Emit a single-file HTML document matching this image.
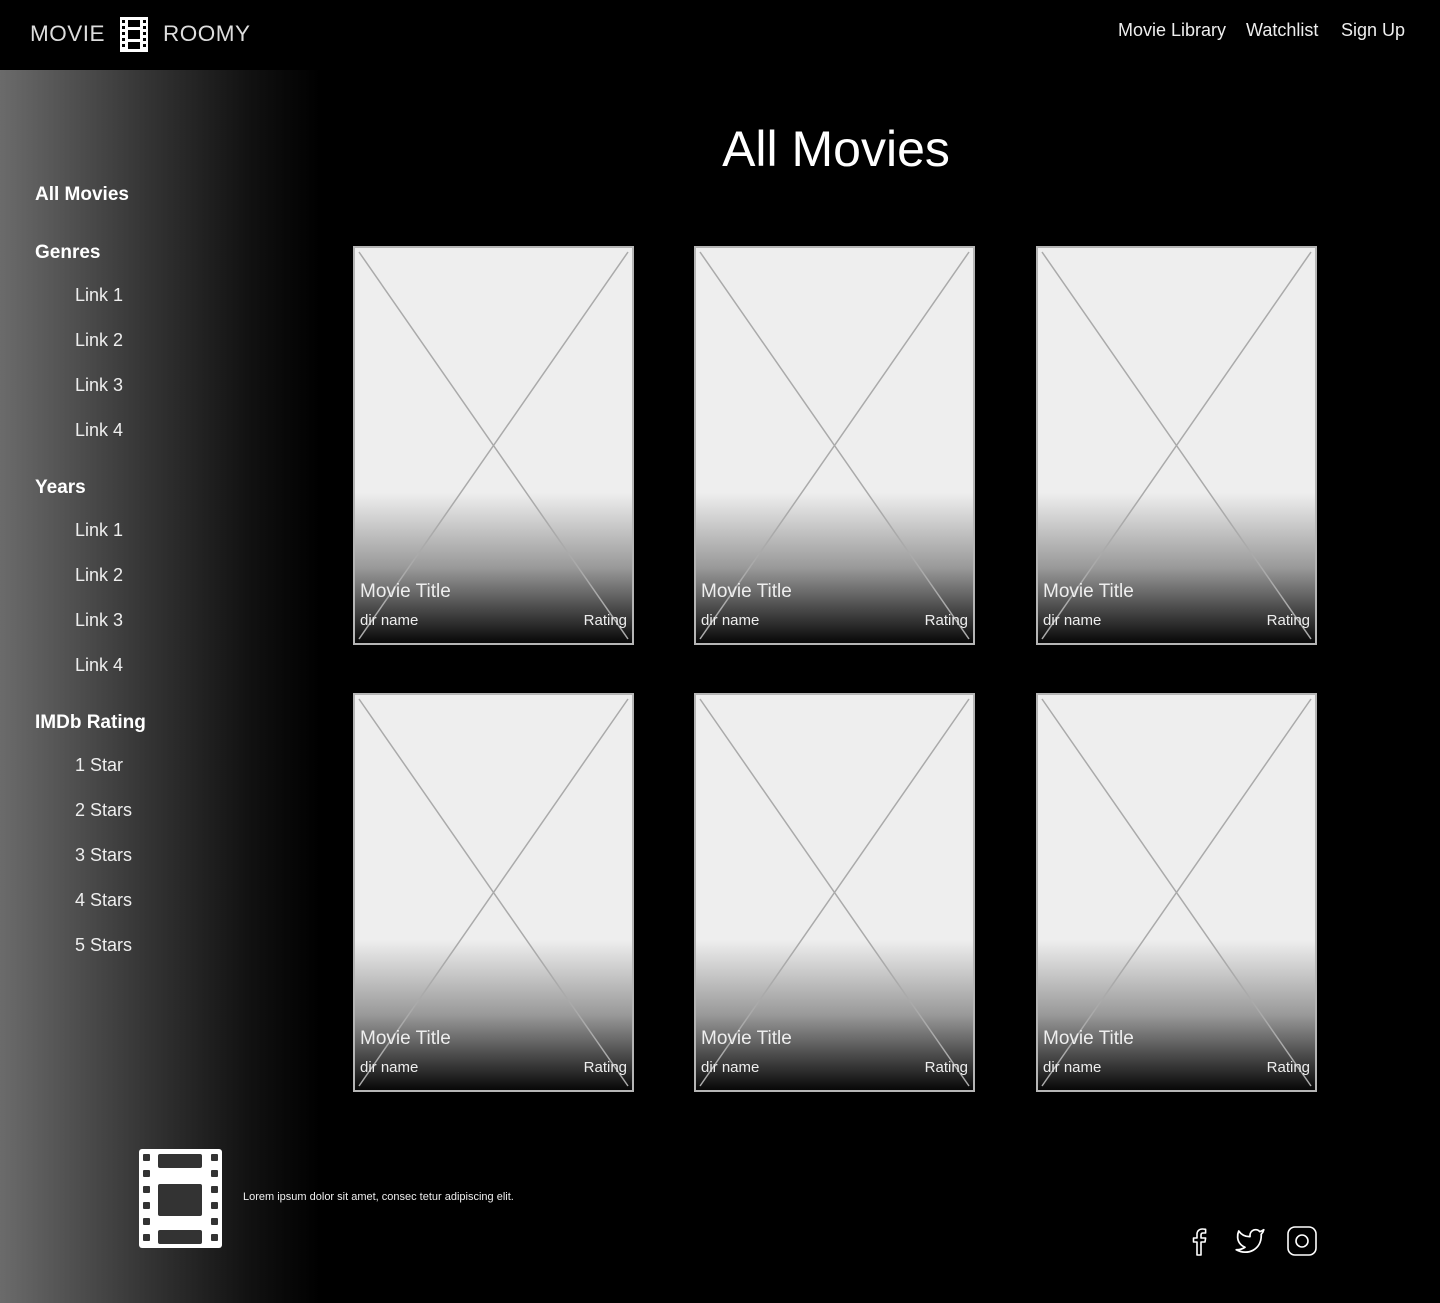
<!DOCTYPE html>
<html><head><meta charset="utf-8">
<style>
*{margin:0;padding:0;box-sizing:border-box}
body{width:1440px;height:1303px;background:#000;position:relative;overflow:hidden;font-family:"Liberation Sans",sans-serif;color:#fff}
.side{position:absolute;left:0;top:70px;width:330px;height:1233px;background:linear-gradient(to right,#6b6b6b 0px,#333 150px,#111 250px,#000 320px)}
.hdr{position:absolute;left:0;top:0;width:1440px;height:70px;background:#000}
.logo{position:absolute;top:21px;font-size:22.5px;letter-spacing:0.5px;color:#ddd}
.nav{position:absolute;top:20px;font-size:18px;color:#eee}
.s{position:absolute;font-size:19px;font-weight:bold;left:35px}
.l{position:absolute;font-size:18px;left:75px;color:#eee}
h1{position:absolute;left:0;width:1672px;text-align:center;top:120px;font-size:50px;font-weight:normal}
.card{position:absolute;width:281px;height:399px;border:2px solid #b5b5b5;background:linear-gradient(to bottom,#eee 0px,#eee 245px,#999 320px,#000 399px);overflow:hidden}
.card svg{position:absolute;left:0;top:0}
.t{position:absolute;left:5px;top:333px;font-size:19px;color:#eee}
.d{position:absolute;left:5px;top:364px;font-size:15px;color:#eee}
.r{position:absolute;right:5px;top:364px;font-size:15px;color:#eee}
</style></head><body>
<div class="side"></div>
<div class="hdr"></div>
<div class="logo" style="left:30px">MOVIE</div>
<svg style="position:absolute;left:120px;top:17px" width="28" height="35" viewBox="0 0 28 35"><rect width="28" height="35" fill="#fff"/><g fill="#000"><rect x="8" y="3" width="12" height="7"/><rect x="8" y="13" width="12" height="9"/><rect x="8" y="25" width="12" height="7"/><rect x="2" y="3" width="3" height="3"/><rect x="2" y="9" width="3" height="3"/><rect x="2" y="15" width="3" height="3"/><rect x="2" y="21" width="3" height="3"/><rect x="2" y="27" width="3" height="3"/><rect x="23" y="3" width="3" height="3"/><rect x="23" y="9" width="3" height="3"/><rect x="23" y="15" width="3" height="3"/><rect x="23" y="21" width="3" height="3"/><rect x="23" y="27" width="3" height="3"/></g></svg>
<div class="logo" style="left:163px">ROOMY</div>
<div class="nav" style="left:1118px">Movie Library</div>
<div class="nav" style="left:1246px">Watchlist</div>
<div class="nav" style="left:1341px">Sign Up</div>

<div class="s" style="top:184px">All Movies</div>
<div class="s" style="top:242px">Genres</div>
<div class="l" style="top:285px">Link 1</div>
<div class="l" style="top:330px">Link 2</div>
<div class="l" style="top:375px">Link 3</div>
<div class="l" style="top:420px">Link 4</div>
<div class="s" style="top:477px">Years</div>
<div class="l" style="top:520px">Link 1</div>
<div class="l" style="top:565px">Link 2</div>
<div class="l" style="top:610px">Link 3</div>
<div class="l" style="top:655px">Link 4</div>
<div class="s" style="top:712px">IMDb Rating</div>
<div class="l" style="top:755px">1 Star</div>
<div class="l" style="top:800px">2 Stars</div>
<div class="l" style="top:845px">3 Stars</div>
<div class="l" style="top:890px">4 Stars</div>
<div class="l" style="top:935px">5 Stars</div>

<h1>All Movies</h1>

<div class="card" style="left:353px;top:246px"><svg width="277" height="395"><path d="M4 4L273 391M273 4L4 391" stroke="#aaa" stroke-width="1.5"/></svg><div class="t">Movie Title</div><div class="d">dir name</div><div class="r">Rating</div></div>
<div class="card" style="left:694px;top:246px"><svg width="277" height="395"><path d="M4 4L273 391M273 4L4 391" stroke="#aaa" stroke-width="1.5"/></svg><div class="t">Movie Title</div><div class="d">dir name</div><div class="r">Rating</div></div>
<div class="card" style="left:1036px;top:246px"><svg width="277" height="395"><path d="M4 4L273 391M273 4L4 391" stroke="#aaa" stroke-width="1.5"/></svg><div class="t">Movie Title</div><div class="d">dir name</div><div class="r">Rating</div></div>
<div class="card" style="left:353px;top:693px"><svg width="277" height="395"><path d="M4 4L273 391M273 4L4 391" stroke="#aaa" stroke-width="1.5"/></svg><div class="t">Movie Title</div><div class="d">dir name</div><div class="r">Rating</div></div>
<div class="card" style="left:694px;top:693px"><svg width="277" height="395"><path d="M4 4L273 391M273 4L4 391" stroke="#aaa" stroke-width="1.5"/></svg><div class="t">Movie Title</div><div class="d">dir name</div><div class="r">Rating</div></div>
<div class="card" style="left:1036px;top:693px"><svg width="277" height="395"><path d="M4 4L273 391M273 4L4 391" stroke="#aaa" stroke-width="1.5"/></svg><div class="t">Movie Title</div><div class="d">dir name</div><div class="r">Rating</div></div>

<svg style="position:absolute;left:139px;top:1149px" width="83" height="99" viewBox="0 0 83 99"><rect width="83" height="99" rx="3" fill="#fff"/><g fill="#333"><rect x="19" y="5" width="44" height="14" rx="2"/><rect x="19" y="35" width="44" height="32" rx="2"/><rect x="19" y="81" width="44" height="14" rx="2"/><g id="h"><rect x="4" y="5" width="7" height="7" rx="1"/><rect x="4" y="21" width="7" height="7" rx="1"/><rect x="4" y="37" width="7" height="7" rx="1"/><rect x="4" y="53" width="7" height="7" rx="1"/><rect x="4" y="69" width="7" height="7" rx="1"/><rect x="4" y="85" width="7" height="7" rx="1"/></g><use href="#h" x="68"/></g></svg>
<div style="position:absolute;left:243px;top:1191px;font-size:11px;color:#eee">Lorem ipsum dolor sit amet, consec tetur adipiscing elit.</div>

<svg style="position:absolute;left:1185px;top:1225px" width="135" height="32" fill="none" stroke="#fff" stroke-width="1.6" stroke-linejoin="round">
<path d="M16 30V17h4l.6-4H16v-3c0-1.2.5-2 2-2h2.6V4.3C20 4.2 18.7 4 17.4 4 14.5 4 12 5.8 12 9.3V13H8.5v4H12v13z"/>
<g transform="translate(50,1) scale(1.25)"><path d="M23 3a10.9 10.9 0 0 1-3.14 1.53 4.48 4.48 0 0 0-7.86 3v1A10.66 10.66 0 0 1 3 4s-4 9 5 13a11.64 11.64 0 0 1-7 2c9 5 20 0 20-11.5a4.5 4.5 0 0 0-.08-.83A7.72 7.72 0 0 0 23 3z" stroke-width="1.4"/></g>
<rect x="103" y="2" width="28" height="28" rx="7"/><circle cx="117" cy="16" r="6"/>
</svg>
</body></html>
